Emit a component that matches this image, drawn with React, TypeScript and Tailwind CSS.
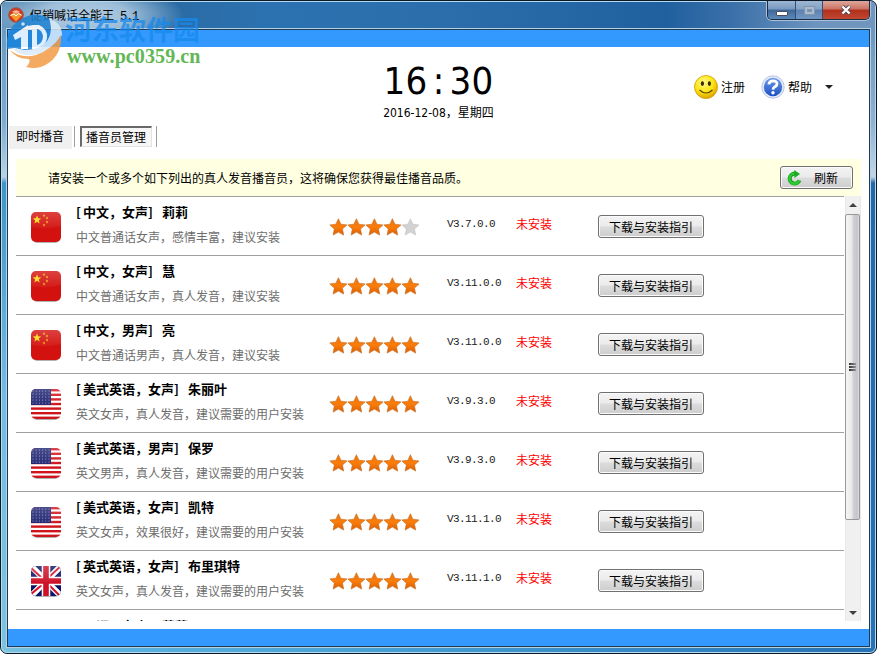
import { useId, type ReactNode } from "react";

type Flag = "cn" | "us" | "uk";

interface Voice {
  name: string;
  desc: string;
  flag: Flag;
  rating: number;
  version: string;
}

const VOICES: Voice[] = [
  { name: "[中文，女声] 莉莉", desc: "中文普通话女声，感情丰富，建议安装", flag: "cn", rating: 4, version: "V3.7.0.0" },
  { name: "[中文，女声] 慧", desc: "中文普通话女声，真人发音，建议安装", flag: "cn", rating: 5, version: "V3.11.0.0" },
  { name: "[中文，男声] 亮", desc: "中文普通话男声，真人发音，建议安装", flag: "cn", rating: 5, version: "V3.11.0.0" },
  { name: "[美式英语，女声] 朱丽叶", desc: "英文女声，真人发音，建议需要的用户安装", flag: "us", rating: 5, version: "V3.9.3.0" },
  { name: "[美式英语，男声] 保罗", desc: "英文男声，真人发音，建议需要的用户安装", flag: "us", rating: 5, version: "V3.9.3.0" },
  { name: "[美式英语，女声] 凯特", desc: "英文女声，效果很好，建议需要的用户安装", flag: "us", rating: 5, version: "V3.11.1.0" },
  { name: "[英式英语，女声] 布里琪特", desc: "英文女声，真人发音，建议需要的用户安装", flag: "uk", rating: 5, version: "V3.11.1.0" },
];

const STAR = "M9 0.8 L11.5 6.3 L17.6 7 L13.1 11.2 L14.3 17.2 L9 14.2 L3.7 17.2 L4.9 11.2 L0.4 7 L6.5 6.3 Z";
const SMALL_STAR = "M0 -1.5 L0.4 -0.5 L1.5 -0.4 L0.6 0.3 L0.9 1.4 L0 0.8 L-0.9 1.4 L-0.6 0.3 L-1.5 -0.4 L-0.4 -0.5 Z";

function FlagIcon({ flag }: { flag: Flag }) {
  const id = useId();
  return (
    <svg viewBox="0 0 30 31" className="h-[31px] w-[30px] shrink-0">
      <defs>
        <clipPath id={`${id}c`}>
          <rect width="30" height="30" rx="5" />
        </clipPath>
        <linearGradient id={`${id}g`} x1="0" y1="0" x2="0" y2="1">
          <stop offset="0" stopColor="#fff" stopOpacity="0.2" />
          <stop offset="1" stopColor="#fff" stopOpacity="0.04" />
        </linearGradient>
      </defs>
      <rect x="1" y="2" width="28" height="29" rx="5" fill="#000" opacity="0.3" />
      <g clipPath={`url(#${id}c)`}>
        {flag === "cn" && (
          <>
            <rect width="30" height="30" fill="#d3120f" />
            <path d="M6 3.2 L7.1 6.3 L10.2 6.4 L7.8 8.4 L8.6 11.6 L6 9.8 L3.4 11.6 L4.2 8.4 L1.8 6.4 L4.9 6.3 Z" fill="#fbd914" />
            {[[13, 3.5], [16, 6], [16, 10], [13, 13]].map(([x, y]) => (
              <path key={`${x}-${y}`} d={SMALL_STAR} transform={`translate(${x} ${y})`} fill="#f5b016" />
            ))}
          </>
        )}
        {flag === "us" && (
          <>
            <rect width="30" height="30" fill="#fff" />
            {[0, 4.6, 9.2, 13.8, 18.4, 23, 27.6].map((y) => (
              <rect key={y} y={y} width="30" height="2.4" fill="#d0141c" />
            ))}
            <rect width="20" height="16" fill="#1d2270" />
            {[2, 5, 8, 11, 14].map((y) =>
              [2, 5.2, 8.4, 11.6, 14.8, 18].map((x) => (
                <circle key={`${x}-${y}`} cx={x} cy={y} r="0.5" fill="#b3b7dc" />
              )),
            )}
          </>
        )}
        {flag === "uk" && (
          <>
            <rect width="30" height="30" fill="#0d1466" />
            <path d="M0 0 L30 30 M30 0 L0 30" stroke="#fff" strokeWidth="6" />
            <path d="M-1 1 L12 13 M31 -1 L18 11 M30 31 L18 19 M-1 29 L12 18" stroke="#d2142a" strokeWidth="2" />
            <path d="M15 0 V30 M0 15 H30" stroke="#fff" strokeWidth="8.6" />
            <path d="M15 0 V30 M0 15 H30" stroke="#ce1126" strokeWidth="5.6" />
          </>
        )}
        <path d="M0 0 H30 V14 Q15 18 0 15 Z" fill={`url(#${id}g)`} />
      </g>
    </svg>
  );
}

function Stars({ rating }: { rating: number }) {
  return (
    <svg viewBox="0 0 91 19" className="h-[19px] w-[91px]">
      <defs>
        <linearGradient id="star-on" x1="0" y1="0" x2="0" y2="1">
          <stop offset="0" stopColor="#e8730c" />
          <stop offset="0.5" stopColor="#fb7d0a" />
          <stop offset="1" stopColor="#d95f05" />
        </linearGradient>
      </defs>
      {[0, 1, 2, 3, 4].map((i) => (
        <path
          key={i}
          d={STAR}
          transform={`translate(${i * 18 + 0.4} 0.9)`}
          fill={i < rating ? "url(#star-on)" : "#d2d2d2"}
          stroke={i < rating ? "#c76a1c" : "#c4c4c4"}
          strokeWidth="0.6"
        />
      ))}
    </svg>
  );
}

function WinButton({ className, children }: { className: string; children: ReactNode }) {
  return (
    <button
      className={`flex h-[23px] items-center rounded-[3px] border border-[#707070] bg-[linear-gradient(#f3f3f3,#ebebeb_48%,#dcdcdc_52%,#cdcdcd)] text-[12px] leading-none whitespace-nowrap text-black shadow-[inset_0_0_0_1px_#fbfbfb] ${className}`}
    >
      {children}
    </button>
  );
}

function VoiceRow({ voice }: { voice: Voice }) {
  return (
    <li className="flex h-[59px] shrink-0 border-t border-[#a0a0a0] pl-[15px]">
      <div className="pt-[15px]">
        <FlagIcon flag={voice.flag} />
      </div>
      <div className="w-[268px] pl-[15px] whitespace-nowrap">
        <p className="mt-[6px] text-[13px] leading-[18px] font-bold">
          <VoiceName name={voice.name} />
        </p>
        <p className="mt-[7px] text-[12px] leading-[18px] text-[#6d6d6d]">{voice.desc}</p>
      </div>
      <div className="w-[118px] pt-[20px]">
        <Stars rating={voice.rating} />
      </div>
      <p className="mt-[20px] w-[69px] font-['Liberation_Mono'] text-[11px] leading-[14px] tracking-[-0.6px] whitespace-nowrap text-[#1a1a1a]">
        {voice.version}
      </p>
      <p className="mt-[18px] w-[82px] text-[12px] leading-[18px] text-[#ff0000]">未安装</p>
      <WinButton className="mt-[18px] w-[106px] justify-center">下载与安装指引</WinButton>
    </li>
  );
}

// Brackets and the gap keep the half-width cell of a bitmap song face.
function VoiceName({ name }: { name: string }) {
  const [lang, person] = name.slice(1).split("] ");
  return (
    <span className="flex">
      <span className="w-[7px]">[</span>
      <span>{lang}</span>
      <span className="w-[14px]">]</span>
      <span>{person}</span>
    </span>
  );
}

function Scrollbar() {
  return (
    <div className="ml-px flex w-4 flex-col border-x border-[#e8e8e8] bg-[#f0f0f0]">
      <div className="flex h-[18px] items-center justify-center">
        <svg viewBox="0 0 8 4" className="h-1 w-2">
          <path d="M4 0 L8 4 H0 Z" fill="#404040" />
        </svg>
      </div>
      <div className="-ml-px flex h-[306px] items-center justify-center rounded-[2px] border border-[#979797] bg-[linear-gradient(90deg,#f5f5f5,#e9e9eb_45%,#d0d1d6_55%,#c4c5ca_85%,#dcdcde)]">
        <div className="mr-px flex flex-col gap-px">
          <div className="h-[2px] w-[7px] bg-linear-to-r from-[#333] to-[#999]" />
          <div className="h-[2px] w-[7px] bg-linear-to-r from-[#333] to-[#999]" />
          <div className="h-[2px] w-[7px] bg-linear-to-r from-[#333] to-[#999]" />
        </div>
      </div>
      <div className="flex-1" />
      <div className="flex h-[17px] items-center justify-center">
        <svg viewBox="0 0 8 4" className="h-1 w-2">
          <path d="M4 4 L8 0 H0 Z" fill="#404040" />
        </svg>
      </div>
    </div>
  );
}

function TitleBar() {
  return (
    <div className="flex h-[26px] shrink-0 bg-[radial-gradient(ellipse_100px_34px_at_82px_14px,#b3cde2_0%,#9dbed9_45%,transparent_100%),linear-gradient(90deg,#5b8cb8,#35709f_4%,#2a6ba5_20%,#2c72b0_30%,#2c6eac_50%,#20609f_76%,#3c71a9_84%,#6d94bf_93%,#7296bd)]">
      <svg viewBox="0 0 16 16" className="mt-[5px] ml-[6px] size-4">
        <circle cx="8" cy="8" r="7.3" fill="#d8381c" stroke="#8d5a56" />
        <path d="M2 8 Q8 3.5 14 8 L8 14.6 Z" fill="#f39b2c" />
        <path d="M4 5 Q8 1.5 12 5 Q8 7 4 5Z" fill="#f2b9a6" />
        <path d="M2.5 8.5 L6 7 L8 9 L10.5 6.5 L13.5 8" stroke="#fff" fill="none" />
      </svg>
      <p className="mt-1 ml-[6px] flex-1 text-[12px] leading-[18px] text-black">
        促销喊话全能王<span className="ml-[6px] font-['Liberation_Mono'] text-[12px] tracking-[-1.2px]">5.1</span>
      </p>
      <div className="mr-[5px] -mt-px flex h-[19px] rounded-b-[5px] border border-t-0 border-[#1d2c44] shadow-[0_0_0_1px_#a9c2dc]">
        <div className="flex w-7 items-center justify-center rounded-bl-[4px] border-r border-[#34506f] bg-[linear-gradient(#9db6d3,#7799c0_45%,#3e6798_50%,#5c89bb)]">
          <div className="mt-[6px] h-[5px] w-3 rounded-[1px] border border-[#4a4e5c] bg-white" />
        </div>
        <div className="flex w-[27px] items-center justify-center border-r border-[#34506f] bg-[linear-gradient(#9db6d3,#84a3c6_45%,#5c82af_50%,#7198c4)]">
          <div className="flex h-[9px] w-[11px] items-center justify-center border border-[#8294ac] bg-[#a8bbd1]">
            <div className="h-[3px] w-[5px] border border-[#8294ac] bg-[#6e91ba]" />
          </div>
        </div>
        <div className="flex w-[46px] items-center justify-center rounded-br-[4px] bg-[linear-gradient(#dda79c,#cb7263_45%,#b12f1b_50%,#c04832)]">
          <svg viewBox="0 0 12 10" className="h-[10px] w-3">
            <path d="M2.4 1.3 L9.6 8.7 M9.6 1.3 L2.4 8.7" stroke="#4e4b55" strokeWidth="4" />
            <path d="M2.4 1.5 L9.6 8.5 M9.6 1.5 L2.4 8.5" stroke="#fff" strokeWidth="2.4" />
          </svg>
        </div>
      </div>
    </div>
  );
}

function Header() {
  return (
    <header className="grid h-[77px] grid-cols-[1fr_auto_1fr]">
      <div />
      <div className="text-center font-['DejaVu_Sans_Condensed','DejaVu_Sans','Noto_Sans_CJK_SC',sans-serif] [font-stretch:75%]">
        <div className="mt-[13px] flex justify-center text-[38px] leading-[42px]">
          <span className="w-[22px]">1</span>
          <span className="w-[22px]">6</span>
          <span className="w-[22px]">:</span>
          <span className="w-[22px]">3</span>
          <span className="w-[22px]">0</span>
        </div>
        <p className="mt-[2px] text-[12px] leading-[18px] whitespace-nowrap">2016-12-08，星期四</p>
      </div>
      <div className="mt-[28px] flex h-[24px] items-center justify-end pr-[36px] text-[12px]">
        <svg viewBox="0 0 24 24" className="size-6">
          <defs>
            <radialGradient id="smile" cx="0.4" cy="0.3" r="0.75">
              <stop offset="0" stopColor="#fff88a" />
              <stop offset="0.55" stopColor="#fde50f" />
              <stop offset="1" stopColor="#d99b00" />
            </radialGradient>
          </defs>
          <circle cx="12" cy="12" r="11.5" fill="url(#smile)" stroke="#cf9c0a" strokeWidth="0.8" />
          <ellipse cx="8.4" cy="8.6" rx="1.6" ry="2.4" fill="#3a2a00" />
          <ellipse cx="15.4" cy="8.6" rx="1.6" ry="2.4" fill="#3a2a00" />
          <path d="M5.5 15 Q12 21 18.5 15" stroke="#5b4300" strokeWidth="1.1" fill="none" />
        </svg>
        <span className="ml-[3px]">注册</span>
        <svg viewBox="0 0 24 24" className="ml-4 size-6">
          <defs>
            <linearGradient id="help" x1="0" y1="0" x2="0" y2="1">
              <stop offset="0" stopColor="#6f9be8" />
              <stop offset="1" stopColor="#1c50c4" />
            </linearGradient>
          </defs>
          <circle cx="12" cy="12" r="11.2" fill="#e6ebf8" stroke="#b9c5e3" />
          <circle cx="12" cy="12" r="9.2" fill="url(#help)" />
          <path d="M7.9 9.4 Q8.2 5.9 12.2 5.9 Q16.1 6 16 9 Q15.8 10.8 13.8 11.8 Q12.1 12.7 12 14.6" stroke="#fff" strokeWidth="2.8" fill="none" />
          <circle cx="12" cy="17.8" r="1.7" fill="#fff" />
        </svg>
        <span className="ml-[3px]">帮助</span>
        <svg viewBox="0 0 8 4" className="ml-[13px] h-1 w-2">
          <path d="M0 0 H8 L4 4 Z" fill="#222" />
        </svg>
      </div>
    </header>
  );
}

function Watermark() {
  return (
    <div className="pointer-events-none absolute top-[10px] left-[5px] flex">
      <svg viewBox="0 0 56 58" className="h-[58px] w-[56px] opacity-85">
        <path d="M1 38 Q-1 18 14 9 Q28 -1 43 7 Q50 13 47 24 L41 37 L22 40 L9 37 Z" fill="#1f83d3" />
        <path d="M7 24 L22 14 V38 H15 V26 L9 29 Z" fill="#fff" />
        <path d="M27 14 H33 Q42 18 41 27 Q40 35 31 38 H26 V19 H22 V15 Z" fill="#fff" />
        <path d="M31 18 V34 Q37 32 37 25 Q36 19 31 18Z" fill="#2487d8" />
        <path d="M43 7 Q56 12 56 24 Q50 36 38 41 Q24 47 12 42 L6 37 Q22 42 36 35 Q49 25 43 7Z" fill="#d9ebf8" />
        <path d="M4 39 Q15 48 30 44 Q47 38 55 24 Q56 44 41 53 Q32 59 20 56 Q25 51 23 48 Q10 48 4 39Z" fill="#f39c45" />
        <circle cx="17" cy="13" r="1.8" fill="#d5ecff" />
      </svg>
      <div className="ml-[3px] flex flex-col">
        <span className="mt-[2px] font-['Noto_Sans_CJK_SC',sans-serif] text-[27px] leading-[32px] font-bold whitespace-nowrap text-[#1589ee]/75">
          河东软件园
        </span>
        <span className="ml-[2px] font-['Liberation_Serif',serif] text-[20px] leading-[22px] font-bold tracking-[0.1px] text-[#62b754]">
          www.pc0359.cn
        </span>
      </div>
    </div>
  );
}

export default function App() {
  return (
    <div className="h-[654px] w-[877px] bg-white">
      <div className="relative flex h-full flex-col overflow-hidden rounded-[7px] border border-[#0b1828] bg-[linear-gradient(90deg,#7cc3de,#5fb4e2_8%,#469fd4_45%,#2672b4)] font-['Noto_Sans_CJK_SC',sans-serif] text-black">
        <div className="flex min-h-0 flex-1 flex-col rounded-[6px] border border-[#b5dcee]">
          <TitleBar />
          <div className="flex min-h-0 flex-1">
            <div className="w-1 bg-[linear-gradient(#6a9bc2,#7fabcf_15%,#b9d2e4_24%,#3f94ca_25%,#72bde4_60%,#7cc3de)]" />
            <div className="flex min-w-0 flex-1 flex-col border border-[#b3d2e6]">
              <div className="flex min-h-0 flex-1 flex-col border border-[#1d3a56] bg-white">
                <div className="h-[17px] shrink-0 bg-[#3399ff]" />
                <Header />

                <nav className="flex h-[35px] shrink-0 pl-px text-[12px] leading-[18px]">
                  <div className="mt-[2px] h-[23px] w-[63px] bg-[#f0f0f0] pt-px pl-[7px]">即时播音</div>
                  <div className="mt-[2px] ml-[2px] h-[21px] w-px bg-[#a0a0a0]" />
                  <div className="mt-[2px] ml-[5px] h-[21px] w-[72px] border-t-2 border-r border-b border-l-2 border-t-[#696969] border-r-[#e3e3e3] border-b-[#e3e3e3] border-l-[#696969] bg-[#f7f7f7] pl-1 leading-[17px]">
                    播音员管理
                  </div>
                  <div className="mt-[2px] ml-1 h-[21px] w-px bg-[#a0a0a0]" />
                </nav>

                <div className="mr-2 ml-2 flex h-[37px] shrink-0 items-center bg-[#ffffe1] pr-2 pl-8 text-[12px]">
                  <p className="flex-1">请安装一个或多个如下列出的真人发音播音员，这将确保您获得最佳播音品质。</p>
                  <WinButton className="w-[73px] pl-[5px]">
                    <svg viewBox="0 0 16 16" className="size-4">
                      <path d="M13.4 10.4 A5 5 0 1 1 9 3.6" stroke="#169b1d" strokeWidth="4" fill="none" />
                      <path d="M13.2 10.4 A5 5 0 1 1 9 3.7" stroke="#2ccc31" strokeWidth="2.4" fill="none" />
                      <path d="M8.2 0 L14 4 L8.4 8 Z" fill="#1bab22" />
                    </svg>
                    <span className="ml-[12px]">刷新</span>
                  </WinButton>
                </div>

                <div className="mr-2 ml-2 flex h-[425px] shrink-0 overflow-hidden">
                  <ul className="flex w-[828px] flex-col overflow-hidden">
                    {VOICES.map((voice) => (
                      <VoiceRow key={voice.name} voice={voice} />
                    ))}
                    <li className="h-[59px] shrink-0 border-t border-[#a0a0a0] pt-[7px] pl-[60px] text-[13px] leading-[18px] font-bold">
                      <VoiceName name="[日语，女声] 莉莉" />
                    </li>
                  </ul>
                  <Scrollbar />
                </div>

                <div className="flex-1" />
                <div className="h-[17px] shrink-0 bg-[#3399ff]" />
              </div>
            </div>
            <div className="w-1 bg-[linear-gradient(#7095be,#8fb0d1_15%,#c5d5e6_24%,#2468ac_25%,#2672b8_100%)]" />
          </div>
          <div className="h-1 shrink-0" />
        </div>
        <Watermark />
      </div>
    </div>
  );
}
